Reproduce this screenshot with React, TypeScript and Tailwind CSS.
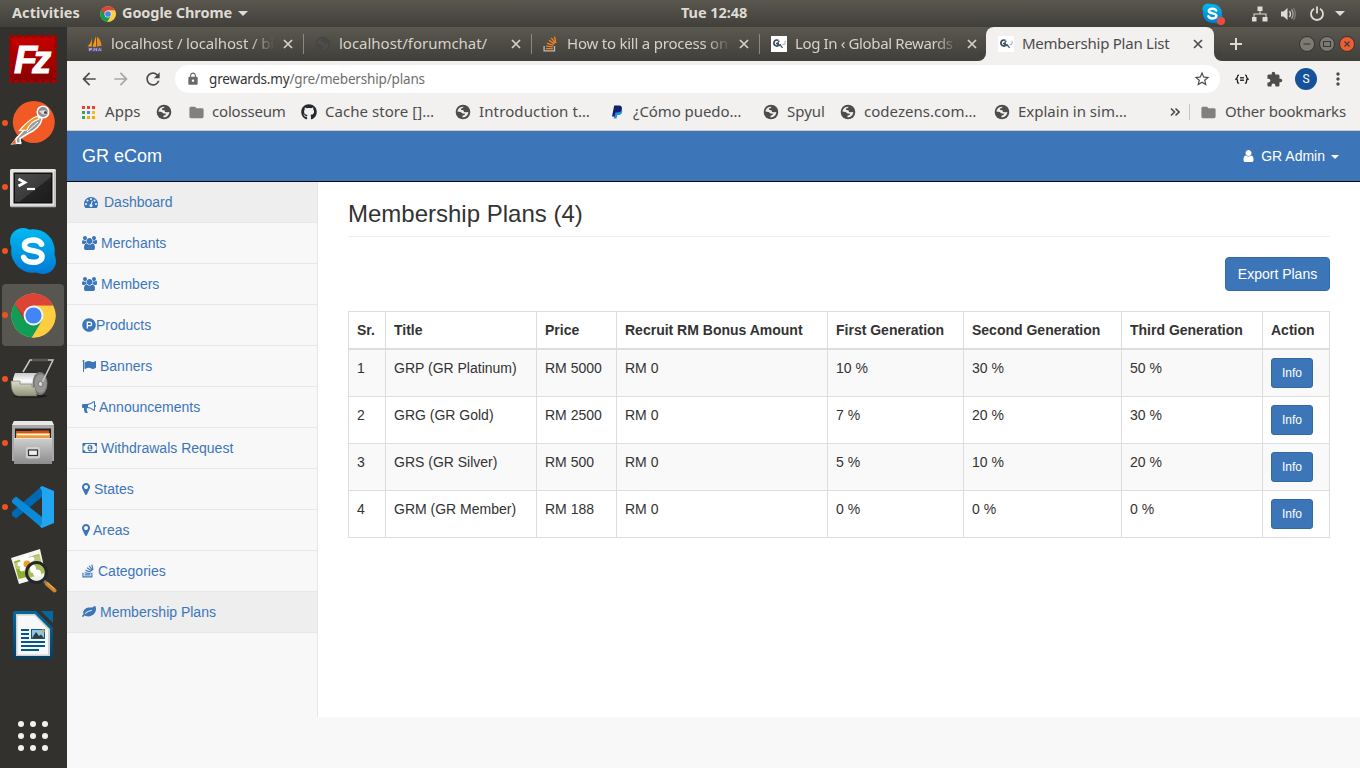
import React from "react";
import { FaGithub, FaProductHunt } from "react-icons/fa";
import {
  MdArrowBack,
  MdArrowForward,
  MdRefresh,
  MdLock,
  MdStarBorder,
  MdExtension,
  MdMoreVert,
  MdFolder,
} from "react-icons/md";

/* ---------- glyphs ---------- */

const GLYPHS = {
  user: "M1536 1399q0 109-62.5 187t-150.5 78h-854q-88 0-150.5-78t-62.5-187q0-85 8.5-160.5t31.5-152 58.5-131 94-89 134.5-34.5q131 128 313 128t313-128q76 0 134.5 34.5t94 89 58.5 131 31.5 152 8.5 160.5zm-256-887q0 159-112.5 271.5t-271.5 112.5-271.5-112.5-112.5-271.5 112.5-271.5 271.5-112.5 271.5 112.5 112.5 271.5z",
  users: "M529 896q-162 5-265 128h-134q-82 0-138-40.5t-56-118.5q0-353 124-353 6 0 43.5 21t97.5 42.5 119 21.5q67 0 133-23-5 37-5 66 0 159 93 291zm1071 637q0 120-73 189.5t-194 69.5h-874q-121 0-194-69.5t-73-189.5q0-53 3.5-103.5t14-109 26.5-108.5 43-97.5 62-81 85.5-53.5 111.5-20q10 0 43 21.5t73 48 107 48 135 21.5 135-21.5 107-48 73-48 43-21.5q61 0 111.5 20t85.5 53.5 62 81 43 97.5 26.5 108.5 14 109 3.5 103.5zm-1024-1277q0 106-75 181t-181 75-181-75-75-181 75-181 181-75 181 75 75 181zm704 384q0 159-112.5 271.5t-271.5 112.5-271.5-112.5-112.5-271.5 112.5-271.5 271.5-112.5 271.5 112.5 112.5 271.5zm576 225q0 78-56 118.5t-138 40.5h-134q-103-123-265-128 93-132 93-291 0-29-5-66 66 23 133 23 59 0 119-21.5t97.5-42.5 43.5-21q124 0 124 353zm-128-609q0 106-75 181t-181 75-181-75-75-181 75-181 181-75 181 75 75 181z",
  gauge: "M384 1152q0-53-37.5-90.5t-90.5-37.5-90.5 37.5-37.5 90.5 37.5 90.5 90.5 37.5 90.5-37.5 37.5-90.5zm192-448q0-53-37.5-90.5t-90.5-37.5-90.5 37.5-37.5 90.5 37.5 90.5 90.5 37.5 90.5-37.5 37.5-90.5zm428 481l101-382q6-26-7.5-48.5t-38.5-29.5-48 6.5-30 39.5l-101 382q-60 5-107 43.5t-63 98.5q-20 77 20 146t117 89 146-20 89-117q16-60-6-117t-72-91zm660-33q0-53-37.5-90.5t-90.5-37.5-90.5 37.5-37.5 90.5 37.5 90.5 90.5 37.5 90.5-37.5 37.5-90.5zm-640-640q0-53-37.5-90.5t-90.5-37.5-90.5 37.5-37.5 90.5 37.5 90.5 90.5 37.5 90.5-37.5 37.5-90.5zm448 192q0-53-37.5-90.5t-90.5-37.5-90.5 37.5-37.5 90.5 37.5 90.5 90.5 37.5 90.5-37.5 37.5-90.5zm320 448q0 261-141 483-19 29-54 29h-1402q-35 0-54-29-141-221-141-483 0-182 71-348t191-286 286-191 348-71 348 71 286 191 191 286 71 348z",
  flag: "M320 256q0 72-64 110v1266q0 13-9.5 22.5t-22.5 9.5h-64q-13 0-22.5-9.5t-9.5-22.5v-1266q-64-38-64-110 0-53 37.5-90.5t90.5-37.5 90.5 37.5 37.5 90.5zm1472 64v763q0 25-12.5 38.5t-39.5 27.5q-215 116-369 116-61 0-123.5-22t-108.5-48-115.5-48-142.5-22q-192 0-464 146-17 9-33 9-26 0-45-19t-19-45v-742q0-32 31-55 21-14 79-43 236-120 421-120 107 0 200 29t219 88q38 19 88 19 54 0 117.5-21t110-47 88-47 54.5-21q26 0 45 19t19 45z",
  bullhorn: "M1664 640q53 0 90.5 37.5t37.5 90.5-37.5 90.5-90.5 37.5v384q0 52-38 90t-90 38q-417-347-812-380-58 19-91 66t-31 100.5 40 92.5q-20 33-23 65.5t6 58 33.5 55 48 50 61.5 50.5q-29 58-111.5 83t-168.5 11.5-132-55.5q-7-23-29.5-87.5t-32-94.5-23-89-15-101 3.5-98.5 22-110.5h-122q-66 0-113-47t-47-113v-192q0-66 47-113t113-47h480q435 0 896-384 52 0 90 38t38 90v384zm-128 604v-954q-394 302-768 343v270q377 42 768 341z",
  money: "M768 1152h384v-96h-128v-448h-114l-148 137 77 80q42-37 55-57h2v288h-128v96zm512-256q0 70-21 142t-59.5 134-101.5 101-138 39-138-39-101.5-101-59.5-134-21-142 21-142 59.5-134 101.5-101 138-39 138 39 101.5 101 59.5 134 21 142zm512 256v-512q-106 0-181-75t-75-181h-1152q0 106-75 181t-181 75v512q106 0 181 75t75 181h1152q0-106 75-181t181-75zm128-832v1152q0 26-19 45t-45 19h-1792q-26 0-45-19t-19-45v-1152q0-26 19-45t45-19h1792q26 0 45 19t19 45z",
  marker: "M1152 640q0-106-75-181t-181-75-181 75-75 181 75 181 181 75 181-75 75-181zm256 0q0 109-33 179l-364 774q-16 33-47.5 52t-67.5 19-67.5-19-46.5-52l-365-774q-33-70-33-179 0-212 150-362t362-150 362 150 150 362z",
  leaf: "M1280 704q0-26-19-45t-45-19q-172 0-318 49.5t-259.5 134-235.5 219.5q-19 21-19 45 0 26 19 45t45 19q24 0 45-19 27-24 74-71t67-66q137-124 268.5-176t313.5-52q26 0 45-19t19-45zm512-198q0 95-20 193-46 224-184.5 383t-357.5 268q-214 108-438 108-148 0-286-47-15-5-88-42t-96-37q-16 0-39.5 32t-45 70-52.5 70-60 32q-43 0-63.5-17.5t-45.5-59.5q-2-4-6-11t-5.5-10-3-9.5-1.5-13.5q0-35 31-73.5t68-65.5 68-56 31-48q0-4-14-38t-16-44q-9-51-9-104 0-115 43.5-220t119-184.5 170.5-139 204-95.5q55-18 145-25.5t179.5-9 178.5-6 163.5-24 113.5-56.5l29.5-29.5 29.5-28 27-20 36.5-16 43.5-4.5q39 0 70.5 46t47.5 112 24 124 8 96z",
};

function Glyph({ d, box, className }: { d: string; box: string; className: string }) {
  return (
    <svg viewBox={box} className={`h-[14px] shrink-0 fill-current ${className}`}>
      <path d={d} />
    </svg>
  );
}

/* ---------- logos ---------- */

function ChromeLogo({ className }: { className: string }) {
  return (
    <svg viewBox="0 0 48 48" className={className}>
      <circle cx="24" cy="24" r="23.5" fill="#fc4" />
      <path d="M24 24 3.9 11.8A23.5 23.5 0 0 0 22.3 47.4L34 30z" fill="#0f9d58" />
      <path d="M24 13.5H45A23.5 23.5 0 0 0 3.9 11.8L14.9 29.3z" fill="#db4437" />
      <path d="M44.9 13.5A23.5 23.5 0 0 1 22.3 47.4L33.1 29.3 34.5 24 24 13.5z" fill="#ffcd40" />
      <path d="M3.9 11.8 14.9 29.3 13.4 24z" fill="#a52714" opacity=".6" />
      <circle cx="24" cy="24" r="10.6" fill="#f1f1f1" />
      <circle cx="24" cy="24" r="8.6" fill="#4285f4" />
    </svg>
  );
}

function SkypeLogo({ className }: { className: string }) {
  return (
    <svg viewBox="0 0 48 48" className={className}>
      <defs>
        <linearGradient id="skype" gradientUnits="userSpaceOnUse" x1="0" y1="0" x2="0" y2="48">
          <stop offset="0" stopColor="#00bcf2" />
          <stop offset="1" stopColor="#0078d4" />
        </linearGradient>
      </defs>
      <g fill="url(#skype)">
        <circle cx="14" cy="14" r="13" />
        <circle cx="34" cy="34" r="13" />
        <circle cx="24" cy="24" r="21.8" />
      </g>
      <path
        d="M32.500 17.200C31 14 28 13 24 13c-4.600 0-8.500 1.700-8.500 5.400 0 7.400 17.500 3.200 17.500 11 0 4-4.200 5.900-9 5.900-4.500 0-8-1.500-9.400-5"
        fill="none"
        stroke="#fff"
        strokeWidth="5.600"
        strokeLinecap="round"
      />
    </svg>
  );
}

function FileZillaLogo() {
  return (
    <svg viewBox="0 0 48 48" className="size-12">
      <defs>
        <linearGradient id="fz" x1="0" y1="0" x2="0" y2="1">
          <stop offset="0" stopColor="#c80000" />
          <stop offset="1" stopColor="#860000" />
        </linearGradient>
      </defs>
      <rect x="1.500" y="1.500" width="45" height="45" fill="url(#fz)" />
      <rect x="1.500" y="1.500" width="45" height="45" fill="none" stroke="#a80000" strokeWidth="3.400" strokeLinecap="round" strokeDasharray="2.500 5" />
      <text
        x="5"
        y="38"
        fill="#fff"
        stroke="#fff"
        strokeWidth="1"
        fontFamily="Liberation Sans, sans-serif"
        fontWeight="700"
        fontStyle="italic"
        fontSize="38"
        letterSpacing="-5"
      >
        Fz
      </text>
    </svg>
  );
}

function PostmanLogo() {
  return (
    <svg viewBox="0 0 48 48" className="size-12">
      <circle cx="24.800" cy="23" r="21" fill="#f15a24" />
      <path d="M2 45.500 8.500 37l4 7z" fill="#f15a24" stroke="#fff" strokeWidth=".5" />
      <path d="M31 18c-8 2-13 7-16 13l-8 9 .5 4 4 .5-.5-5 8-5C26 32 32 26 33 20z" fill="#9a9a9a" stroke="#fff" strokeWidth="1.500" />
      <path d="M29 17c-7 2-14 9-18.500 14.500l7.500-.5C20 26 24 22 30 20z" fill="#f7931e" stroke="#fff" strokeWidth="1.200" />
      <circle cx="34" cy="13" r="5.800" fill="#8f8f8f" stroke="#fff" strokeWidth="1.500" />
      <path d="m30 12 6-1 3 2-2 3-4-1z" fill="#ddd" />
      <circle cx="36.500" cy="13.500" r="1.500" fill="#444" />
      <path d="m18 33 11-10" stroke="#fff" strokeWidth="1" />
    </svg>
  );
}

function TerminalLogo() {
  return (
    <svg viewBox="0 0 48 48" className="size-12">
      <defs>
        <linearGradient id="term" x1="0" y1="0" x2="1" y2="1">
          <stop offset="0" stopColor="#4c4c4c" />
          <stop offset=".55" stopColor="#3b3b3b" />
          <stop offset=".56" stopColor="#242424" />
          <stop offset="1" stopColor="#1c1c1c" />
        </linearGradient>
      </defs>
      <rect x="1" y="6" width="46" height="38" rx="1.500" fill="#e4e4e2" />
      <path d="M2 43.500h44V8" stroke="#b5b5b3" strokeWidth="1.500" fill="none" />
      <rect x="4.500" y="9.500" width="39" height="31" fill="#101010" />
      <rect x="6" y="11" width="36" height="28" fill="url(#term)" />
      <path d="M9.500 16 16 19.500 9.500 23" fill="none" stroke="#fff" strokeWidth="2.600" />
      <path d="M18 26h8" stroke="#fff" strokeWidth="2.200" />
    </svg>
  );
}

function ToiletRollLogo() {
  return (
    <svg viewBox="0 0 48 48" className="size-12">
      <defs>
        <linearGradient id="roll" x1="0" y1="0" x2="0" y2="1">
          <stop offset="0" stopColor="#c9c9c9" />
          <stop offset=".35" stopColor="#fafafa" />
          <stop offset="1" stopColor="#bdbdbd" />
        </linearGradient>
        <linearGradient id="paper" x1="0" y1="0" x2="0" y2="1">
          <stop offset="0" stopColor="#dcddc8" />
          <stop offset="1" stopColor="#8f9179" />
        </linearGradient>
      </defs>
      <ellipse cx="21" cy="41" rx="17" ry="2" fill="#1f1e1b" />
      <path d="M6 18h26v21H6q-5-10 0-21z" fill="url(#roll)" />
      <ellipse cx="31" cy="28.500" rx="7.500" ry="11.500" fill="#777876" />
      <ellipse cx="31.500" cy="28.500" rx="6" ry="9.500" fill="#969794" />
      <path d="M2 26h9v3h12v3h3l2 9H9q-7-1-7-14z" fill="url(#paper)" stroke="#70715f" strokeWidth=".6" />
      <path d="M14 17 21 5h23L32 30" fill="none" stroke="#c6cac6" strokeWidth="1.500" />
      <path d="M23 5h16" stroke="#565a56" strokeWidth="2.600" />
      <circle cx="31.500" cy="29" r="2.500" fill="#d8d8d5" stroke="#6f706d" />
    </svg>
  );
}

function FilesLogo() {
  return (
    <svg viewBox="0 0 48 48" className="size-12">
      <defs>
        <linearGradient id="cab" x1="0" y1="0" x2="0" y2="1">
          <stop offset="0" stopColor="#cfcfcf" />
          <stop offset="1" stopColor="#8d8d8d" />
        </linearGradient>
      </defs>
      <path d="M5 2h38l2 5v35H3V7z" fill="#a9a9a9" />
      <path d="M5 2h38l2 4H3z" fill="#e8e8e8" />
      <rect x="6" y="9.500" width="36" height="11" fill="#222" />
      <path d="M7 12h15l2-.5h16v8H7z" fill="#d4511e" />
      <path d="M7 14h34v5H7z" fill="#ee9a3a" />
      <path d="M8 15.500h32" stroke="#fff3dc" strokeWidth="1.500" />
      <rect x="5" y="19" width="38" height="26" fill="url(#cab)" />
      <path d="M5 19.500h38" stroke="#e2e2e2" />
      <rect x="17" y="28" width="14" height="11.500" rx="2" fill="#d0d0d0" />
      <rect x="19.500" y="31" width="9" height="5.500" fill="#eee" stroke="#333" strokeWidth="1.200" />
    </svg>
  );
}

function VsCodeLogo() {
  return (
    <svg viewBox="0 0 48 48" className="size-12">
      <path d="M3 31v-2L33 3v11L7 35.500 3 32.500z" fill="#0069b3" />
      <path d="M3 17 7 13.500l26 20.500v11L3 19.500z" fill="#0b8ad8" />
      <path d="M33 3 45 8v32l-12 5-2-1.500 2-3V8l-2-3.500z" fill="#22a5f1" />
    </svg>
  );
}

function ImageViewerLogo() {
  return (
    <svg viewBox="0 0 48 48" className="size-12">
      <path d="M2 11 31 2l6 27-27 8z" fill="#f4f4f0" />
      <path d="m5 14.500 25-7.500 4.500 19L9.500 32z" fill="#8eae2c" />
      <path d="m5.500 16 25-8.500 2 8-25 7z" fill="#bccb74" />
      <g fill="#fff">
        {[0, 45, 90, 135, 180, 225, 270, 315].map((a) => (
          <ellipse key={a} cx="18" cy="11.500" rx="2.600" ry="4" transform={`rotate(${a} 18 17)`} />
        ))}
      </g>
      <circle cx="18" cy="17" r="3.500" fill="#eba31d" />
      <circle cx="27.500" cy="25.500" r="9" fill="#a9bd5a" />
      <path d="m20 31 15-5v5q-7 6-13 3z" fill="#f0f1ea" />
      <ellipse cx="24" cy="22" rx="3" ry="4" fill="#fff" />
      <ellipse cx="28" cy="26" rx="4" ry="3.500" fill="#fff" />
      <circle cx="27.500" cy="25.500" r="10" fill="none" stroke="#25282a" strokeWidth="3" />
      <path d="M35 34 40 38" stroke="#777" strokeWidth="3" />
      <path d="M38 37 45.500 43.500" stroke="#cb862d" strokeWidth="4" strokeLinecap="round" />
      <path d="m38.500 36 7 6" stroke="#f2c377" strokeWidth="1" />
    </svg>
  );
}

function WriterLogo() {
  return (
    <svg viewBox="0 0 48 48" className="size-12">
      <defs>
        <linearGradient id="wr" x1="0" y1="0" x2="0" y2="1">
          <stop offset="0" stopColor="#0369a3" />
          <stop offset="1" stopColor="#063f5f" />
        </linearGradient>
      </defs>
      <path d="M6.500 0H27l17 17v28q0 3-3 3H7q-3 0-3-3V2.500Q4 0 6.500 0z" fill="url(#wr)" />
      <path d="M7 3h19l15 15v27H7z" fill="#cfd2d3" />
      <path d="M8.500 4.500h17l13.500 14V43.500H8.500z" fill="#f8f8f8" />
      <path d="M32 0h12v12z" fill="#0369a3" />
      <path d="M12 19h8M12 23h8M12 27h8M12 31h24M12 35h24M12 39h18" stroke="#05588a" strokeWidth="2" />
      <rect x="22.500" y="18.500" width="13" height="9" fill="#8fc6ea" stroke="#0b5d8f" />
      <path d="m23 27 4-6 3 4 2-1.500 3 3.500z" fill="#3b3b3b" />
      <circle cx="34" cy="20" r="1.800" fill="#d8b33c" />
    </svg>
  );
}

function PmaIcon() {
  return (
    <svg viewBox="0 0 16 16" className="size-4 shrink-0">
      <path d="M5 1.500Q4.500 7 .500 10.500h4.200z" fill="#f7a21b" />
      <path d="M9 0 5.500 10.800h3.700z" fill="#f89c0e" />
      <path d="M10 .5q4.500 4 4.500 9.500l-4.500.5z" fill="#e98b1a" />
      <path d="M.5 11.500h15l-1 4H1.500z" fill="#57558c" />
      <path d="M2.500 15v-2.500h2v1h-2M7 15v-2.500l1.200 1 1.300-1V15M11.500 15l1.200-2.500L14 15" stroke="#c9c6dd" strokeWidth=".7" fill="none" />
    </svg>
  );
}

function StackIcon({ tray, bars, className }: { tray: string; bars: string; className: string }) {
  return (
    <svg viewBox="0 0 14 16" className={`shrink-0 ${className}`} fill="none">
      <path d="M1.100 10v4.800h10.400V10" stroke={tray} strokeWidth="1.300" />
      <path
        d="M3 12.600h6.800M3.200 10.200l6.700.7M4 7.300l6.400 1.900M5.900 4.300l5.500 3.600M8.300 1.900l4 5.300M11.500.6l1.300 6.200"
        stroke={bars}
        strokeWidth="1.350"
      />
    </svg>
  );
}

function RewardsIcon() {
  return (
    <svg viewBox="0 0 16 16" className="size-4 shrink-0" fill="none">
      <rect width="16" height="16" fill="#fff" />
      <path d="M7.500 4.500A3 3 0 1 0 7 9.800V7.500H5" stroke="#34495f" strokeWidth="1.700" />
      <path d="M8.500 5a2.200 2.200 0 1 0 2 4.500M8.800 8l2.700 4" stroke="#41566d" strokeWidth="1.300" />
      <path d="M11.500 8.500q3.500.5 2.500-3.500" stroke="#a7b5c2" strokeWidth="1.200" />
    </svg>
  );
}

function PaypalIcon() {
  return (
    <svg viewBox="0 0 16 16" className="size-4 shrink-0">
      <path d="M6.500 4.500h5q2.300 1 1.600 3.700-.8 2.800-4 2.800H8.300L7.600 14.500H4.700z" fill="#2790e3" />
      <path d="M5.200 1.500h5q3.200.4 2.700 3.500-.8 3.600-4.700 3.600H6.500L5.600 12.500H3z" fill="#14206b" />
    </svg>
  );
}

function Globe({ className, land }: { className: string; land: string }) {
  return (
    <svg viewBox="0 0 16 16" className={`shrink-0 ${className}`}>
      <circle cx="8" cy="8" r="7.300" fill="currentColor" />
      <path
        d="M2.400 7.600C2.700 4.600 5 2.600 8.800 2.700L7.300 4.200 5.900 4.600l.3 1.500 2.300.2.500 1.600 2 .3 2.300-.2c-.2 3.200-2.300 5.300-5.700 5.400l-.2-1.600 2.100-.7.700-1.300-2.600-.3L5.600 8z"
        fill={land}
      />
    </svg>
  );
}

function Cross() {
  return (
    <svg viewBox="0 0 10 10" className="ml-2 size-[10px] shrink-0" fill="none" stroke="currentColor" strokeWidth="1.700">
      <path d="m1 1 8 8m0-8-8 8" />
    </svg>
  );
}

/* ---------- desktop top bar ---------- */

function TopBar() {
  return (
    <header className="flex h-[27px] shrink-0 items-center bg-linear-to-b from-[#5a574e] to-[#403f3a] text-[14.500px] font-bold text-[#dfdbd2]">
      <div className="w-[100px] pb-px pl-3 tracking-[0.060px]">Activities</div>
      <ChromeLogo className="size-4 shrink-0" />
      <div className="w-[122px] pb-px pl-[6px] whitespace-nowrap tracking-[-0.100px]">Google Chrome</div>
      <Caret className="w-[10px]" />
      <div className="flex-1 pb-0.5 pl-[433px] whitespace-nowrap tracking-[-0.050px]">Tue 12:48</div>
      <div className="relative mr-[28px] size-[22px]">
        <SkypeLogo className="size-[21px]" />
        <span className="absolute -right-px bottom-0 size-2 rounded-full bg-[#f04c3e]" />
      </div>
      <svg viewBox="0 0 16 16" className="mr-[12px] size-4 fill-[#dfdbd2]">
        <path d="M5.500.5h5v4.500h-2v2.500h6V11h1v4.500h-5V11h3V8.500h-11V11h2v4.500h-5V11h2V7.500h6V5h-2z" />
      </svg>
      <svg viewBox="0 0 16 16" className="mr-[13px] size-4" fill="none">
        <path d="M1 5.500h2.500L7.500 2v12l-4-3.500H1z" fill="#dfdbd2" />
        <path d="M9.500 5q2 3 0 6" stroke="#dfdbd2" strokeWidth="1.300" />
        <path d="M11.500 3.300q3.200 4.700 0 9.400" stroke="#aaa79f" strokeWidth="1.300" />
        <path d="M13.400 2q4 6 0 12" stroke="#7d7b75" strokeWidth="1.300" />
      </svg>
      <svg viewBox="0 0 16 16" className="mr-[10px] size-4" fill="none" stroke="#dfdbd2" strokeWidth="1.800">
        <path d="M5 2.800a6 6 0 1 0 6 0M8 .5v7" />
      </svg>
      <Caret className="mr-[15px] w-[10px]" />
    </header>
  );
}

function Caret({ className }: { className: string }) {
  return (
    <svg viewBox="0 0 10 5" className={`shrink-0 fill-current ${className}`}>
      <path d="M0 0h10L5 5z" />
    </svg>
  );
}

/* ---------- dock ---------- */

const DOCK = [
  { name: "filezilla", icon: <FileZillaLogo />, running: false, active: false },
  { name: "postman", icon: <PostmanLogo />, running: true, active: false },
  { name: "terminal", icon: <TerminalLogo />, running: true, active: false },
  { name: "skype", icon: <SkypeLogo className="size-12" />, running: true, active: false },
  { name: "chrome", icon: <ChromeLogo className="size-[45px]" />, running: true, active: true },
  { name: "roll", icon: <ToiletRollLogo />, running: true, active: false },
  { name: "files", icon: <FilesLogo />, running: true, active: false },
  { name: "code", icon: <VsCodeLogo />, running: true, active: false },
  { name: "viewer", icon: <ImageViewerLogo />, running: false, active: false },
  { name: "writer", icon: <WriterLogo />, running: false, active: false },
];

function Dock() {
  return (
    <nav className="flex w-[67px] shrink-0 flex-col bg-[#33312d]">
      {DOCK.map((d) => (
        <div key={d.name} className="flex h-16 items-center pl-[2px]">
          <div className={`flex h-[62px] w-[62px] items-center rounded ${d.active ? "bg-[#585651]" : ""}`}>
            <span className={`size-[6px] shrink-0 rounded-full ${d.running ? "bg-[#e95420]" : ""}`} />
            <span className="mr-[6px] flex flex-1 justify-center">{d.icon}</span>
          </div>
        </div>
      ))}
      <div className="mt-auto mb-[17px] ml-[18px] grid w-[30px] grid-cols-3 gap-[6px]">
        {Array.from({ length: 9 }, (_, i) => (
          <span key={i} className="size-[6px] rounded-full bg-[#f2f1ef]" />
        ))}
      </div>
    </nav>
  );
}

/* ---------- browser chrome ---------- */

const FADE = "[mask-image:linear-gradient(to_right,black_85%,transparent)]";

const TABS = [
  { title: "localhost / localhost / bi", icon: <PmaIcon />, track: "tracking-[-0.140px]", fade: true, box: "w-[228px] pl-[11px]" },
  { title: "localhost/forumchat/", icon: <Globe className="size-4 text-[#464744]" land="#504f4b" />, track: "tracking-[-0.020px]", fade: false, box: "w-[228px] pl-[11px]" },
  { title: "How to kill a process on", icon: <StackIcon tray="#bcbbbb" bars="#f48024" className="mr-[2px] h-4 w-[14px]" />, track: "tracking-[-0.220px]", fade: true, box: "w-[228px] pl-[11px]" },
  { title: "Log In ‹ Global Rewards -", icon: <RewardsIcon />, track: "tracking-[-0.370px]", fade: true, box: "w-[226px] pl-[11px]" },
];

function TabStrip() {
  return (
    <div className="flex h-[34px] items-stretch bg-linear-to-b from-[#5b584f] to-[#403f3a] pl-[9px] text-[15px]">
      {TABS.map((t, i) => (
        <div key={t.title} className={`flex items-center text-[#d6d2c9] ${t.box}`}>
          {t.icon}
          <span className={`ml-2 w-[164px] shrink-0 overflow-hidden pb-0.5 whitespace-nowrap ${t.track} ${t.fade ? FADE : ""}`}>{t.title}</span>
          <Cross />
          {i < 3 && <span className="ml-auto h-5 w-px bg-[#8b8880]" />}
        </div>
      ))}
      <div className="relative flex w-[228px] items-center rounded-t-lg bg-[#f2f1f0] pl-3 text-[#4c4c4c]">
        <span className="absolute bottom-0 -left-2 size-2 bg-[#f2f1f0]">
          <span className="block size-2 rounded-br-lg bg-[#43413c]" />
        </span>
        <span className="absolute -right-2 bottom-0 size-2 bg-[#f2f1f0]">
          <span className="block size-2 rounded-bl-lg bg-[#43413c]" />
        </span>
        <RewardsIcon />
        <span className="ml-2 w-[163px] shrink-0 pb-0.5 whitespace-nowrap tracking-[-0.240px]">Membership Plan List</span>
        <Cross />
      </div>
      <svg viewBox="0 0 12 12" className="ml-4 size-3 self-center" stroke="#dfdbd2" strokeWidth="2">
        <path d="M6 0v12M0 6h12" />
      </svg>
      <div className="ml-auto flex items-center gap-1 pr-[5px]">
        <WindowButton fill="#7c7a73" d="M4.500 8h7" />
        <WindowButton fill="#7c7a73" d="M4.500 5.500h7v5h-7z" />
        <WindowButton fill="#e95e35" d="m5.500 5.500 5 5m0-5-5 5" />
      </div>
    </div>
  );
}

function WindowButton({ fill, d }: { fill: string; d: string }) {
  return (
    <svg viewBox="0 0 16 16" className="size-4" fill="none">
      <circle cx="8" cy="8" r="7.500" fill={fill} stroke="#34332f" />
      <path d={d} stroke="#3a3935" strokeWidth="1.100" />
    </svg>
  );
}

function Toolbar() {
  return (
    <div className="flex h-9 items-center bg-[#f2f1f0] text-[#4c4c4c]">
      <MdArrowBack className="ml-3 size-5" />
      <MdArrowForward className="ml-3 size-5 text-[#a6a6a5]" />
      <MdRefresh className="ml-3 size-5" />
      <div className="ml-3 flex h-7 w-[1045px] items-center rounded-full bg-white">
        <MdLock className="ml-[11px] size-[14px] text-[#6a6a6a]" />
        <span className="ml-[9px] text-[13.500px] tracking-[-0.170px] text-[#6e6e6e]">
          <span className="text-[#333]">grewards.my</span>/gre/mebership/plans
        </span>
        <MdStarBorder className="mr-[9px] ml-auto size-[18px]" />
      </div>
      <svg viewBox="0 0 14 10" className="ml-[15px] h-[10px] w-[14px]" fill="none" stroke="#222" strokeWidth="1.300">
        <path d="M4 1.200Q2.500 1 2.500 2.500T1 5q1.500 0 1.500 2.500T4 8.800M10 1.200q1.500-.2 1.500 1.300T13 5q-1.500 0-1.500 2.500T10 8.800" />
        <path d="M5 3.500h4M5 5h4M5 6.500h4" strokeWidth=".9" />
      </svg>
      <MdExtension className="ml-[17px] size-[17px]" />
      <span className="ml-[12px] flex size-[22px] items-center justify-center rounded-full bg-[#16529c] font-['Roboto',sans-serif] text-xs text-white">S</span>
      <MdMoreVert className="ml-[11px] size-5" />
    </div>
  );
}

function AppsGrid() {
  const colors = ["#ea4335", "#ea4335", "#ea4335", "#34a853", "#4285f4", "#fbbc04", "#34a853", "#f9ab00", "#f9ab00"];
  return (
    <svg viewBox="0 0 13 13" className="size-[13px] shrink-0" shapeRendering="crispEdges">
      {colors.map((c, i) => (
        <rect key={i} x={(i % 3) * 5} y={Math.floor(i / 3) * 5} width="3" height="3" fill={c} />
      ))}
    </svg>
  );
}

const globe = <Globe className="size-4" land="#eeedec" />;
const BOOKMARKS = [
  { label: "Apps", icon: <AppsGrid />, cls: "w-[74px] gap-[10px] tracking-[0.100px]" },
  { label: "", icon: globe, cls: "w-[32px]" },
  { label: "colosseum", icon: <MdFolder className="size-[17px] shrink-0 text-[#808080]" />, cls: "w-[113px] gap-[7px] tracking-[-0.200px]" },
  { label: "Cache store []…", icon: <FaGithub className="size-4 shrink-0 text-[#24292e]" />, cls: "w-[154px] gap-[8px] tracking-[0.050px]" },
  { label: "Introduction t…", icon: globe, cls: "w-[154px] gap-2 tracking-[0.120px]" },
  { label: "¿Cómo puedo…", icon: <PaypalIcon />, cls: "w-[154px] gap-[8px] tracking-[-0.080px]" },
  { label: "Spyul", icon: globe, cls: "w-[77px] gap-2" },
  { label: "codezens.com…", icon: globe, cls: "w-[154px] gap-2 tracking-[0.030px]" },
  { label: "Explain in sim…", icon: globe, cls: "w-[154px] gap-2" },
];

function BookmarksBar() {
  return (
    <div className="flex h-[34px] items-center border-b border-[#cfccc8] bg-[#f2f1f0] pb-[3px] pl-[15px] text-[15px] whitespace-nowrap text-[#4c4c4c]">
      {BOOKMARKS.map((b, i) => (
        <div key={i} className={`flex h-5 items-center ${b.cls}`}>
          {b.icon}
          {b.label && <span className="pb-0.5">{b.label}</span>}
        </div>
      ))}
      <svg viewBox="0 0 10 10" className="ml-[22px] size-[10px]" fill="none" stroke="currentColor" strokeWidth="1.600">
        <path d="m1 1.500 3.500 3.500L1 8.500m4.500-7L9 5 5.500 8.500" />
      </svg>
      <span className="mx-[9px] h-4 w-px bg-[#c9c7c4]" />
      <MdFolder className="ml-px size-[17px] shrink-0 text-[#808080]" />
      <span className="ml-2 pb-0.5 tracking-[-0.220px]">Other bookmarks</span>
    </div>
  );
}

/* ---------- application ---------- */

const wide = "-64 0 1920 1792";
const square = "0 0 1792 1792";
const MENU = [
  { label: "Dashboard", icon: <Glyph d={GLYPHS.gauge} box={square} className="mx-[2px] w-[14px]" />, gap: "gap-1", on: true },
  { label: "Merchants", icon: <Glyph d={GLYPHS.users} box={wide} className="w-[15px]" />, gap: "gap-1", on: false },
  { label: "Members", icon: <Glyph d={GLYPHS.users} box={wide} className="w-[15px]" />, gap: "gap-1", on: false },
  { label: "Products", icon: <FaProductHunt className="size-[14px]" />, gap: "", on: false },
  { label: "Banners", icon: <Glyph d={GLYPHS.flag} box={square} className="w-[14px]" />, gap: "gap-1", on: false },
  { label: "Announcements", icon: <Glyph d={GLYPHS.bullhorn} box={square} className="w-[14px]" />, gap: "gap-[3px]", on: false },
  { label: "Withdrawals Request", icon: <Glyph d={GLYPHS.money} box={wide} className="w-[15px]" />, gap: "gap-1", on: false },
  { label: "States", icon: <Glyph d={GLYPHS.marker} box="384 0 1024 1792" className="w-2" />, gap: "gap-1", on: false },
  { label: "Areas", icon: <Glyph d={GLYPHS.marker} box="384 0 1024 1792" className="w-2" />, gap: "gap-[3px]", on: false },
  { label: "Categories", icon: <StackIcon tray="currentColor" bars="currentColor" className="h-[14px] w-[12px]" />, gap: "gap-1", on: false },
  { label: "Membership Plans", icon: <Glyph d={GLYPHS.leaf} box={square} className="w-[14px]" />, gap: "gap-1", on: true },
];

function Sidebar() {
  return (
    <aside className="w-[251px] shrink-0 border-r border-[#e7e7e7] bg-[#f8f8f8]">
      {MENU.map((m) => (
        <a
          key={m.label}
          href="#"
          className={`flex h-[41px] items-center border-b border-[#e7e7e7] pl-[15px] text-[#3c76b8] ${m.gap} ${m.on ? "bg-[#eeeeee]" : ""}`}
        >
          {m.icon}
          {m.label}
        </a>
      ))}
    </aside>
  );
}

const COLUMNS = [
  { title: "Sr.", w: "w-[37px]" },
  { title: "Title", w: "w-[151px]" },
  { title: "Price", w: "w-[80px]" },
  { title: "Recruit RM Bonus Amount", w: "w-[211px]" },
  { title: "First Generation", w: "w-[136px]" },
  { title: "Second Generation", w: "w-[158px]" },
  { title: "Third Generation", w: "w-[141px]" },
  { title: "Action", w: "w-[67px]" },
];

const PLANS = [
  ["1", "GRP (GR Platinum)", "RM 5000", "RM 0", "10 %", "30 %", "50 %"],
  ["2", "GRG (GR Gold)", "RM 2500", "RM 0", "7 %", "20 %", "30 %"],
  ["3", "GRS (GR Silver)", "RM 500", "RM 0", "5 %", "10 %", "20 %"],
  ["4", "GRM (GR Member)", "RM 188", "RM 0", "0 %", "0 %", "0 %"],
];

function PlansTable() {
  return (
    <table className="mt-5 w-[982px] table-fixed border-collapse">
      <thead>
        <tr>
          {COLUMNS.map((c) => (
            <th key={c.title} className={`border border-b-2 border-[#dddddd] p-2 text-left font-bold whitespace-nowrap ${c.w}`}>
              {c.title}
            </th>
          ))}
        </tr>
      </thead>
      <tbody>
        {PLANS.map((row) => (
          <tr key={row[0]} className="odd:bg-[#f9f9f9]">
            {row.map((cell, i) => (
              <td key={i} className="border border-[#dddddd] p-2 align-top">
                {cell}
              </td>
            ))}
            <td className="border border-[#dddddd] p-2 align-top">
              <button className="block h-[30px] w-[42px] rounded-[3px] border border-[#3469a5] bg-[#3c76b8] text-center text-xs leading-[18px] text-white">
                Info
              </button>
            </td>
          </tr>
        ))}
      </tbody>
    </table>
  );
}

function WebPage() {
  return (
    <div className="flex flex-1 flex-col bg-[#f8f8f8] font-['Liberation_Sans',Arial,sans-serif] text-sm text-[#333333]">
      <div className="flex h-[51px] items-center justify-between border-b border-[#080808] bg-[#3c76b8] pr-[21px] pl-[15px] text-white">
        <span className="text-lg">GR eCom</span>
        <span className="flex items-center">
          <Glyph d={GLYPHS.user} box="256 0 1280 1792" className="mr-[7px] w-[11px]" />
          GR Admin
          <Caret className="mt-px ml-[6px] w-2" />
        </span>
      </div>
      <div className="flex h-[535px]">
        <Sidebar />
        <main className="flex flex-1 flex-col bg-white px-[30px]">
          <h1 className="mt-[19px] h-[36px] border-b border-[#eeeeee] text-2xl leading-[26px]">Membership Plans (4)</h1>
          <button className="mt-5 h-[34px] w-[105px] self-end rounded border border-[#3469a5] bg-[#3c76b8] text-white">Export Plans</button>
          <PlansTable />
        </main>
      </div>
    </div>
  );
}

export default function App() {
  return (
    <div className="flex h-[768px] w-[1360px] flex-col overflow-hidden font-['Noto_Sans',sans-serif]">
      <TopBar />
      <div className="flex flex-1">
        <Dock />
        <div className="flex flex-1 flex-col">
          <TabStrip />
          <Toolbar />
          <BookmarksBar />
          <WebPage />
        </div>
      </div>
    </div>
  );
}
